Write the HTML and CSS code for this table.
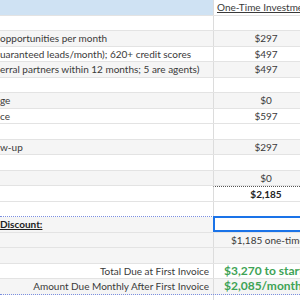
FILE: index.html
```html
<!DOCTYPE html>
<html>
<head>
<meta charset="utf-8">
<link rel="stylesheet" href="styles.css">
</head>
<body>
<div class="sheet">
  <div class="row head"><div class="c1 blue"></div><div class="c2 left"><span class="u">One-Time Investment</span></div></div>
  <div class="row"><div class="c1"></div><div class="c2"></div></div>
  <div class="row g"><div class="c1">opportunities per month</div><div class="c2">$297</div></div>
  <div class="row"><div class="c1">uaranteed leads/month); 620+ credit scores</div><div class="c2">$497</div></div>
  <div class="row g"><div class="c1">erral partners within 12 months; 5 are agents)</div><div class="c2">$497</div></div>
  <div class="row"><div class="c1"></div><div class="c2"></div></div>
  <div class="row g"><div class="c1">ge</div><div class="c2">$0</div></div>
  <div class="row"><div class="c1">ce</div><div class="c2">$597</div></div>
  <div class="row"><div class="c1"></div><div class="c2"></div></div>
  <div class="row g"><div class="c1">w-up</div><div class="c2">$297</div></div>
  <div class="row"><div class="c1"></div><div class="c2"></div></div>
  <div class="row g"><div class="c1"></div><div class="c2">$0</div></div>
  <div class="row"><div class="c1"></div><div class="c2 total">$2,185</div></div>
  <div class="row blueline"><div class="c1"></div><div class="c2"></div></div>
  <div class="row g"><div class="c1"><span class="bold u">Discount:</span></div><div class="c2 sel"></div></div>
  <div class="row g"><div class="c1"></div><div class="c2 left save">$1,185 one-time savings</div></div>
  <div class="row g"><div class="c1"></div><div class="c2"></div></div>
  <div class="row"><div class="c1 right">Total Due at First Invoice</div><div class="c2 left green">$3,270 to start</div></div>
  <div class="row g last"><div class="c1 right">Amount Due Monthly After First Invoice</div><div class="c2 left green">$2,085/month</div></div>
  <div class="row"><div class="c1"></div><div class="c2"></div></div>
</div>
</body>
</html>
```
FILE: styles.css
```css
* { box-sizing: border-box; }
html, body { margin: 0; padding: 0; background: #ffffff; }
body { width: 300px; height: 300px; overflow: hidden; }
.sheet {
  font-family: "Lato", "Liberation Sans", sans-serif;
  font-size: 10px;
  color: #3a3a3a;
  width: 320px;
}
.row {
  display: grid;
  grid-template-columns: 213px 105px;
  height: 15.5px;
  border-bottom: 1px solid #e3e3e3;
}
.row.head { border-bottom-color: #e3e3e3; }
.row.g { background: #f5f5f5; }
.c1, .c2 {
  display: flex;
  align-items: center;
  white-space: nowrap;
  overflow: visible;
  line-height: 1;
}
.c1 { padding-left: 0; }
.c2 {
  border-left: 1px solid #dcdcdc;
  justify-content: center;
}
.c2.left { justify-content: flex-start; }
.c1.right { justify-content: flex-end; padding-right: 4px; }
.blue { background: #cfe2f3; }
.head .c2 { padding-left: 3px; }
.u { text-decoration: underline; }
.bold { font-weight: 700; color: #222; }
.total {
  font-weight: 700;
  color: #222;
  border-top: 1px dotted #555;
}
.blueline { border-bottom: 1px dotted #7b8fe0; }
.blueline .c2 { }
.sel { border: 2px solid #1a73e8; background: #ffffff; margin-top: -1px; }
.save { padding-left: 17px; }
.green {
  color: #3ea355;
  font-weight: 700;
  font-size: 12px;
  padding-left: 10px;
}
.last { border-bottom: 1px dotted #7b8fe0; }
```
